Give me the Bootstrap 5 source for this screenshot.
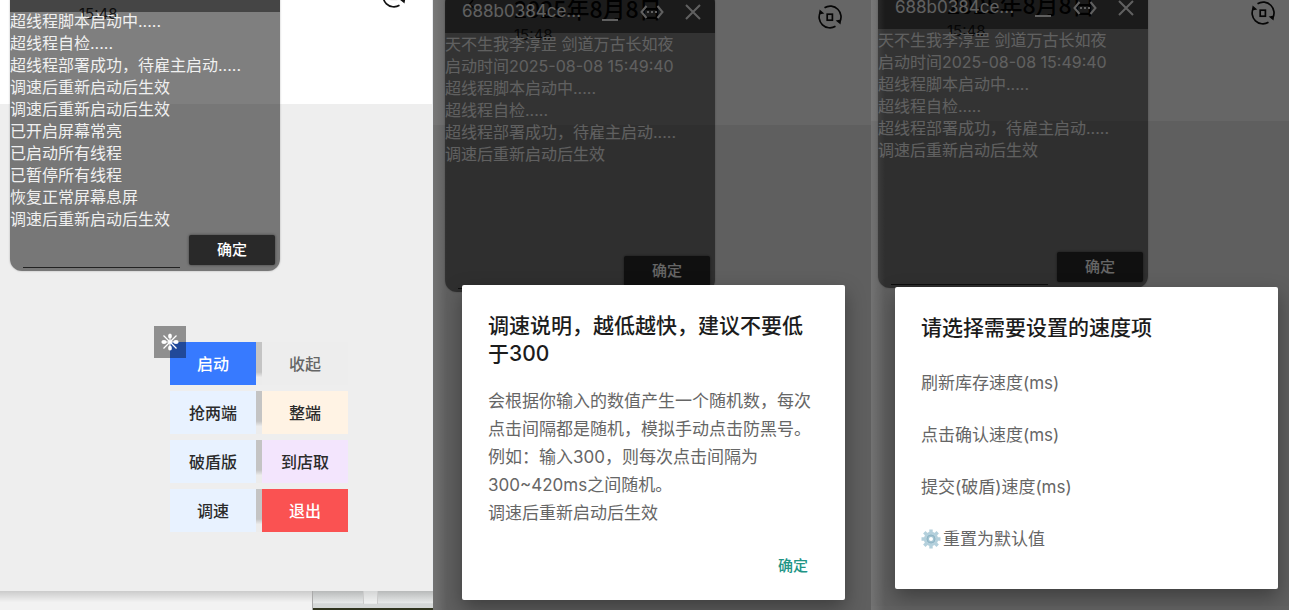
<!DOCTYPE html>
<html lang="zh-CN">
<head>
<meta charset="utf-8">
<meta name="viewport" content="width=device-width, initial-scale=1">
<title>调速说明</title>
<link href="https://cdn.jsdelivr.net/npm/bootstrap@5.3.0/dist/css/bootstrap.min.css" rel="stylesheet">
<style>
  body { font-family: Inter, "Noto Sans CJK SC", sans-serif; background: #f2f2f2; }
  .screens { display: grid; grid-template-columns: 433fr 438fr 418fr; min-height: 100vh; }

  /* one phone screen: --start and --end are the distances of the window and the icon from its edges */
  .screen { --start: 10px; --end: 26px; --crop: 21px; }
  .screen-mid { --start: 12px; --end: 29px; --crop: 0px; }
  .screen-last { --start: 7px; --end: 14px; --crop: 4px; }
  .phone { background: #eee; }
  .scene { margin-top: calc(-1 * var(--crop)); }
  .topbar { height: 125px; background: #fff; padding-left: calc(var(--start) + 69px); padding-right: var(--end); color: #111; }
  .topbar-date { font: 500 23px/30px "Noto Sans CJK SC", sans-serif; margin-top: -7px; }
  .topbar-time { font-size: 15px; line-height: 24px; color: #333; }
  .rotate-icon { margin-top: 5px; }
  .back-icon { position: absolute; left: calc(var(--start) + 20px); top: 0; }

  /* floating log window */
  .console { position: absolute; top: -9px; left: var(--start); width: 270px; background: rgba(0,0,0,.5); border-radius: 12px; overflow: hidden; box-shadow: 0 0 2px rgba(0,0,0,.3); color: #f0f0f0; }
  .console-head { height: 42px; padding-left: 17px; padding-right: 14px; background: rgba(0,0,0,.45); font-size: 17px; }
  .console-log { height: 218px; font-size: 16px; line-height: 22px; }
  .console-log p { margin: 0; white-space: nowrap; }
  .console-foot { height: 41px; padding: 0 5px 3px 13px; gap: 9px; }
  .console-input { min-width: 0; height: 30px; background: transparent; border: 0; border-bottom: 1px solid #222; color: #fff; outline: 0; }
  .console-ok { flex: 0 0 86px; height: 30px; margin-bottom: 3px; background: #292929; border: 0; border-radius: 2px; box-shadow: 0 0 3px rgba(0,0,0,.5); color: #fff; font-size: 15px; font-weight: 500; }
  .icon-btn { background: none; border: 0; padding: 0; color: inherit; display: flex; }

  /* script control buttons */
  .tools { position: relative; margin: 238px 0 0 170px; width: 178px; gap: 6px; }
  .tool-row { gap: 6px; background: linear-gradient(#c4c4c4 70%, #ececec 82%) center / 6px 100% no-repeat; }
  .tool { flex: 1; height: 43px; border: 0; font-size: 16px; font-weight: 500; color: #2b2b2b; background: #e8f2ff; }
  .tool-run { background: #377aff; color: #fff; }
  .tool-fold { background: #ededed; color: #666; }
  .tool-whole { background: #fff3e4; }
  .tool-store { background: #f3e5fd; }
  .tool-quit { background: #fa5252; color: #fff; }
  .float-ball { position: absolute; left: -16px; top: -16px; width: 32px; height: 32px; background: rgba(0,0,0,.4); border: 0; padding: 0; }

  .ledge { height: 19px; background: linear-gradient(rgba(0,0,0,.16), rgba(0,0,0,0) 60%); }
  .ledge-photo { width: 28%; background: linear-gradient(#b8baba, #e9ebeb 65%, #d5d8d8 66%, #d5d8d8 88%, #30341f 89%); border-left: 1px solid #aaa; }
  .ledge-photo span { width: 15px; height: 13px; margin-left: 50px; border: solid #ccc; border-width: 0 1px; background: rgba(255,255,255,.4); }

  .scrim { position: absolute; inset: 0; background: linear-gradient(90deg, rgba(255,255,255,.12), rgba(255,255,255,0) 14px), rgba(0,0,0,.6); }
  .dialog { position: absolute; background: #fff; border-radius: 2px; box-shadow: 0 8px 20px rgba(0,0,0,.35); padding: 27px 26px 0; color: #666; font-size: 17px; line-height: 28px; }
  .dialog-info { left: 29px; right: 26px; top: 285px; padding-bottom: 16px; }
  .dialog-menu { left: 24px; right: 11px; top: 287px; padding-bottom: 24px; }
  .dialog h2 { margin: 0; font-size: 21px; line-height: 28px; font-weight: 500; color: #1c1c1c; }
  .dialog p { margin: 0; }
  .dialog-text { margin-top: 19px; }
  .dialog-ok { height: 36px; margin-top: 21px; padding: 0 11px; background: none; border: 0; color: #219485; font-size: 15px; font-weight: 500; }
  .dialog-list { margin-top: 15px; }
  .dialog-item { height: 52px; padding: 0; background: none; border: 0; color: #666; text-align: left; }
  .gear-icon { margin-right: 2px; }
</style>
</head>
<body>
<svg width="0" height="0" class="position-absolute" aria-hidden="true">
  <symbol id="i-rotate" viewBox="0 0 24 24">
    <g fill="none" stroke="currentColor" stroke-width="1.7">
      <path d="M6.5 2.8A10.8 10.8 0 0 1 21.5 17.5M17.5 21.3A10.8 10.8 0 0 1 2.5 6.8"/>
      <rect x="9.2" y="9.2" width="5.2" height="6"/>
    </g>
    <path d="M1.6 4.5l4.7 4-5.3 1zM22.6 19.6l-5-4 5.2-1z" fill="currentColor"/>
  </symbol>
  <symbol id="i-code" viewBox="0 0 24 14">
    <path d="M6.5 1L1.5 7l5 6M17.5 1l5 6-5 6" fill="none" stroke="currentColor" stroke-width="2"/>
    <path d="M7 6h2v2H7zM11 6h2v2h-2zM15 6h2v2h-2z" fill="currentColor"/>
  </symbol>
  <symbol id="i-close" viewBox="0 0 16 16"><path d="M1 1l14 14M15 1L1 15" fill="none" stroke="currentColor" stroke-width="2"/></symbol>
  <symbol id="i-min" viewBox="0 0 16 20"><path d="M0 18h16" stroke="currentColor" stroke-width="2"/></symbol>
</svg>

<main class="screens">
  <section class="screen d-flex flex-column">
    <div class="phone position-relative overflow-hidden flex-grow-1 border-end border-secondary-subtle">
      <div class="scene position-relative">
        <div class="topbar d-flex justify-content-between align-items-start">
          <div><div class="topbar-date">2025年8月8日</div><div class="topbar-time">15:48</div></div>
          <svg class="rotate-icon" width="24" height="24"><use href="#i-rotate"/></svg>
        </div>
        <div class="console">
          <div class="console-head d-flex align-items-center justify-content-between">
            <span>688b0384ce...</span>
            <button class="icon-btn" aria-label="最小化"><svg width="16" height="20"><use href="#i-min"/></svg></button>
            <button class="icon-btn" aria-label="调整"><svg width="24" height="14"><use href="#i-code"/></svg></button>
            <button class="icon-btn" aria-label="关闭"><svg width="16" height="16"><use href="#i-close"/></svg></button>
          </div>
          <div class="console-log d-flex flex-column justify-content-end overflow-hidden">
            <p>超线程脚本启动中.....</p>
            <p>超线程自检.....</p>
            <p>超线程部署成功，待雇主启动.....</p>
            <p>调速后重新启动后生效</p>
            <p>调速后重新启动后生效</p>
            <p>已开启屏幕常亮</p>
            <p>已启动所有线程</p>
            <p>已暂停所有线程</p>
            <p>恢复正常屏幕息屏</p>
            <p>调速后重新启动后生效</p>
          </div>
          <div class="console-foot d-flex align-items-end">
            <input class="console-input flex-grow-1" type="text" aria-label="输入">
            <button class="console-ok">确定</button>
          </div>
        </div>
        <div class="tools d-flex flex-column">
          <div class="tool-row d-flex"><button class="tool tool-run">启动</button><button class="tool tool-fold">收起</button></div>
          <div class="tool-row d-flex"><button class="tool">抢两端</button><button class="tool tool-whole">整端</button></div>
          <div class="tool-row d-flex"><button class="tool">破盾版</button><button class="tool tool-store">到店取</button></div>
          <div class="tool-row d-flex"><button class="tool">调速</button><button class="tool tool-quit">退出</button></div>
          <button class="float-ball d-flex align-items-center justify-content-center" aria-label="拖动">
            <svg width="18" height="18" viewBox="0 0 18 18" fill="#fff">
              <path d="M2.500 2.500l13 13M15.500 2.500l-13 13" stroke="#fff" stroke-width="1.300"/>
              <path d="M9 3v12M3 9h12" stroke="#fff" stroke-width="1"/>
              <ellipse cx="9" cy="3" rx="1.900" ry="2.600"/><ellipse cx="9" cy="15" rx="1.900" ry="2.600"/>
              <ellipse cx="3" cy="9" rx="2.600" ry="1.900"/><ellipse cx="15" cy="9" rx="2.600" ry="1.900"/>
              <circle cx="9" cy="9" r="1.800"/>
            </svg>
          </button>
        </div>
      </div>
    </div>
    <div class="ledge d-flex justify-content-end"><div class="ledge-photo d-flex"><span></span></div></div>
  </section>

  <section class="screen screen-mid position-relative overflow-hidden">
    <div class="phone h-100">
      <div class="scene position-relative">
        <div class="topbar d-flex justify-content-between align-items-start">
          <svg class="back-icon" width="12" height="10" viewBox="0 0 12 10"><path d="M8 0L4 5l6 3" fill="none" stroke="#222" stroke-width="1.500"/></svg>
          <div><div class="topbar-date">2025年8月8日</div><div class="topbar-time">15:48</div></div>
          <svg class="rotate-icon" width="24" height="24"><use href="#i-rotate"/></svg>
        </div>
        <div class="console">
          <div class="console-head d-flex align-items-center justify-content-between">
            <span>688b0384ce...</span>
            <button class="icon-btn" aria-label="最小化"><svg width="16" height="20"><use href="#i-min"/></svg></button>
            <button class="icon-btn" aria-label="调整"><svg width="24" height="14"><use href="#i-code"/></svg></button>
            <button class="icon-btn" aria-label="关闭"><svg width="16" height="16"><use href="#i-close"/></svg></button>
          </div>
          <div class="console-log">
            <p>天不生我李淳罡 剑道万古长如夜</p>
            <p>启动时间2025-08-08 15:49:40</p>
            <p>超线程脚本启动中.....</p>
            <p>超线程自检.....</p>
            <p>超线程部署成功，待雇主启动.....</p>
            <p>调速后重新启动后生效</p>
          </div>
          <div class="console-foot d-flex align-items-end">
            <input class="console-input flex-grow-1" type="text" aria-label="输入">
            <button class="console-ok">确定</button>
          </div>
        </div>
      </div>
    </div>
    <div class="scrim"></div>
    <div class="dialog dialog-info d-flex flex-column" role="dialog" aria-labelledby="info-title">
      <h2 id="info-title">调速说明，越低越快，建议不要低于300</h2>
      <div class="dialog-text">
        <p>会根据你输入的数值产生一个随机数，每次点击间隔都是随机，模拟手动点击防黑号。</p>
        <p>例如：输入300，则每次点击间隔为300~420ms之间随机。</p>
        <p>调速后重新启动后生效</p>
      </div>
      <button class="dialog-ok align-self-end">确定</button>
    </div>
  </section>

  <section class="screen screen-last position-relative overflow-hidden">
    <div class="phone h-100">
      <div class="scene position-relative">
        <div class="topbar d-flex justify-content-between align-items-start">
          <div><div class="topbar-date">2025年8月8日</div><div class="topbar-time">15:48</div></div>
          <svg class="rotate-icon" width="24" height="24"><use href="#i-rotate"/></svg>
        </div>
        <div class="console">
          <div class="console-head d-flex align-items-center justify-content-between">
            <span>688b0384ce...</span>
            <button class="icon-btn" aria-label="最小化"><svg width="16" height="20"><use href="#i-min"/></svg></button>
            <button class="icon-btn" aria-label="调整"><svg width="24" height="14"><use href="#i-code"/></svg></button>
            <button class="icon-btn" aria-label="关闭"><svg width="16" height="16"><use href="#i-close"/></svg></button>
          </div>
          <div class="console-log">
            <p>天不生我李淳罡 剑道万古长如夜</p>
            <p>启动时间2025-08-08 15:49:40</p>
            <p>超线程脚本启动中.....</p>
            <p>超线程自检.....</p>
            <p>超线程部署成功，待雇主启动.....</p>
            <p>调速后重新启动后生效</p>
          </div>
          <div class="console-foot d-flex align-items-end">
            <input class="console-input flex-grow-1" type="text" aria-label="输入">
            <button class="console-ok">确定</button>
          </div>
        </div>
      </div>
    </div>
    <div class="scrim"></div>
    <div class="dialog dialog-menu" role="dialog" aria-labelledby="menu-title">
      <h2 id="menu-title">请选择需要设置的速度项</h2>
      <div class="dialog-list d-flex flex-column">
        <button class="dialog-item">刷新库存速度(ms)</button>
        <button class="dialog-item">点击确认速度(ms)</button>
        <button class="dialog-item">提交(破盾)速度(ms)</button>
        <button class="dialog-item d-flex align-items-center">
          <svg class="gear-icon" width="20" height="20" viewBox="0 0 20 20" aria-hidden="true">
            <g stroke="#b4d0dc" stroke-width="3.400"><path d="M10 .5v19M.5 10h19M3.300 3.300l13.400 13.400M16.700 3.300L3.300 16.700"/></g>
            <circle cx="10" cy="10" r="7.200" fill="#b4d0dc"/>
            <circle cx="10" cy="10" r="4" fill="#a3c4d2" stroke="#8fb5c6"/>
            <circle cx="10" cy="10" r="2" fill="#fff"/>
          </svg>重置为默认值</button>
      </div>
    </div>
  </section>
</main>
<script src="https://cdn.jsdelivr.net/npm/bootstrap@5.3.0/dist/js/bootstrap.bundle.min.js"></script>
</body>
</html>
